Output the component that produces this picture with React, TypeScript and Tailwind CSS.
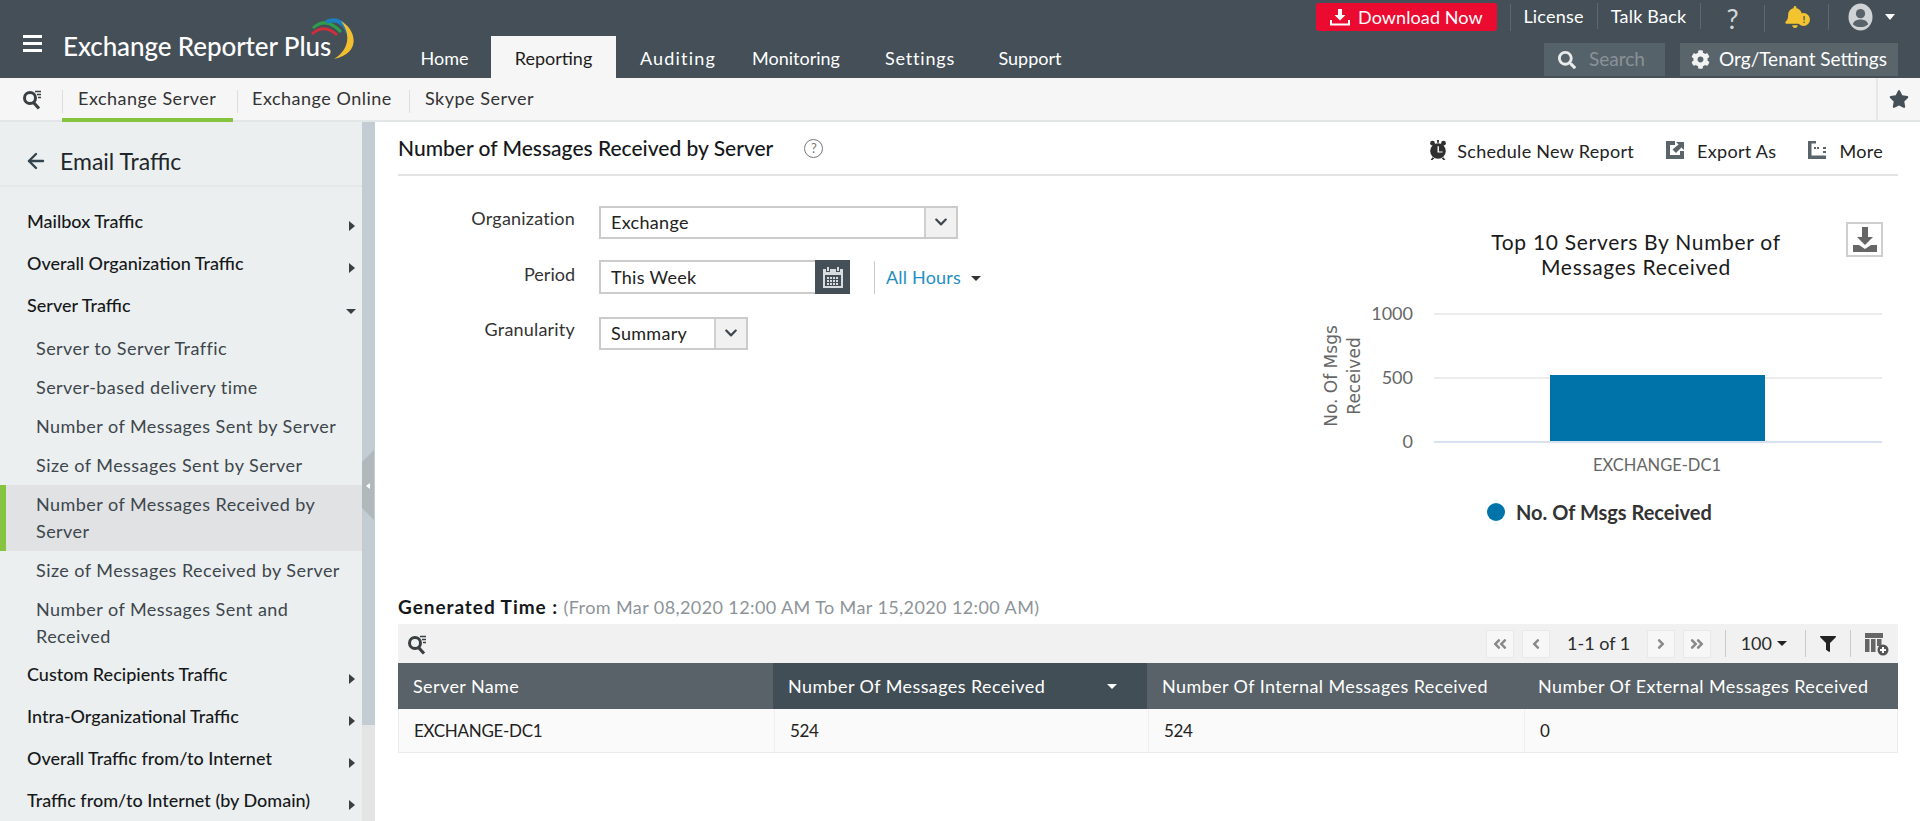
import { FaStar, FaCog, FaSearch, FaFilter, FaAngleDoubleLeft, FaAngleDoubleRight, FaAngleLeft, FaAngleRight, FaChevronDown, FaBell } from "react-icons/fa"
import { ArrowLeft } from "lucide-react"

const Caret = ({ dir = "down", className = "" }: { dir?: "down" | "right"; className?: string }) =>
  dir === "down" ? (
    <span className={`inline-block w-0 h-0 border-x-[5px] border-x-transparent border-t-[5px] ${className}`} />
  ) : (
    <span className={`inline-block w-0 h-0 border-y-[5px] border-y-transparent border-l-[6px] ${className}`} />
  )

const SearchLines = () => (
  <svg width="20" height="22" viewBox="0 0 20 22" fill="none" stroke="#3a3f42">
    <circle cx="8" cy="10" r="5.5" strokeWidth="3" />
    <path d="M11.5 14.5 L17 20.5" strokeWidth="3.2" />
    <path d="M13 3.5h6M15 6.5h4M16 9.5h3" strokeWidth="1.4" />
  </svg>
)

const Logo = () => (
  <svg width="48" height="54" viewBox="0 0 48 54" fill="none" className="-ml-[20px] -mt-[11px]">
    <path d="M2 11 Q15 -1 30 15" stroke="#2f9e4a" strokeWidth="3" />
    <path d="M1 17 Q13 6 26 18" stroke="#d12d3a" strokeWidth="3" />
    <path d="M15 5 Q32 -2 39 21" stroke="#1c7fc0" strokeWidth="4" />
    <path d="M30 4 C47 14 49 37 23 42 C37 34 41 18 30 4 Z" fill="#f2bf2f" />
  </svg>
)

const topLinks = ["License", "Talk Back"]
const tabs = [
  { name: "Home", cls: "w-[93px]" },
  { name: "Reporting", cls: "w-[125px] bg-[#f6f6f6] text-[#1d1d1d]" },
  { name: "Auditing", cls: "w-[124px] tracking-[1.2px]" },
  { name: "Monitoring", cls: "w-[112px]" },
  { name: "Settings", cls: "w-[136px] tracking-[0.8px]" },
  { name: "Support", cls: "w-[84px]" },
]

const Header = () => (
  <header className="h-[78px] bg-[#444f57] flex text-white shrink-0">
    <div className="w-[23px]" />
    <div className="flex flex-col gap-[4px] w-[19px] mt-[35px] h-[18px]">
      <span className="h-[3px] bg-white" />
      <span className="h-[3px] bg-white" />
      <span className="h-[3px] bg-white" />
    </div>
    <div className="ml-[21px] mt-[28px] w-[335px] flex items-start">
      <span className="text-[26px] leading-[36px] font-medium tracking-[-0.1px] whitespace-nowrap">Exchange Reporter Plus</span>
      <Logo />
    </div>
    <nav className="flex items-end">
      {tabs.map((t) => (
        <div key={t.name} className={`h-[42px] flex items-center justify-center text-[18px] pt-[2px] ${t.cls}`}>
          {t.name}
        </div>
      ))}
    </nav>
    <div className="flex-1" />
    <div className="flex flex-col w-[604px] pr-[22px]">
      <div className="flex items-center justify-end h-[43px] pt-[1px] mr-[3px] text-[18px]">
        <div className="w-[181px] h-[28px] -mt-[10px] rounded-[3px] bg-[#ec0b30] flex items-center pl-[14px] gap-[8px]">
          <svg width="20" height="18" viewBox="0 0 20 18" fill="white">
            <path d="M8 1h4v6h3.5L10 12.5 4.5 7H8z" />
            <path d="M0 12v5.5h20V12h-2v3.5H2V12z" />
          </svg>
          <span className="text-[18px] tracking-[0.1px]">Download Now</span>
        </div>
        <div className="w-[1px] h-[27px] bg-[#5d676e] ml-[13px] -mt-[10px]" />
        <div className="flex items-center -mt-[12px]">
          {topLinks.map((l, i) => (
            <div key={l} className={`flex items-center justify-center border-r border-[#5d676e] h-[26px] tracking-[0.2px] ${i === 0 ? "w-[87px]" : "w-[103px]"}`}>
              {l}
            </div>
          ))}
        </div>
        <div className="w-[65px] text-center text-[27px] leading-none text-[#d4d7d9] -mt-[8px] border-r border-[#5d676e]">?</div>
        <div className="w-[64px] flex justify-center -mt-[10px] relative border-r border-[#5d676e] h-[26px]">
          <FaBell size={22} color="#f4c430" className="mt-[2px] -ml-[4px]" />
          <span className="absolute left-[32px] top-[9px] w-[13px] h-[13px] rounded-full bg-[#f4c430] text-[#444f57] text-[10px] leading-[13px] text-center font-bold">!</span>
        </div>
        <div className="w-[66px] flex items-center justify-end gap-[12px] -mt-[10px]">
          <svg width="25" height="28" viewBox="0 0 26 29">
            <ellipse cx="13" cy="14.5" rx="12.5" ry="14" fill="#cfd3d6" />
            <circle cx="13" cy="11" r="4.8" fill="#58626a" />
            <path d="M5 22c1-4 5-5 8-5s7 1 8 5c-2 2-5 3-8 3s-6-1-8-3z" fill="#58626a" />
          </svg>
          <Caret className="border-t-white border-x-[5.5px] border-t-[6px]" />
        </div>
      </div>
      <div className="flex justify-end gap-[15px]">
        <div className="w-[121px] h-[33px] bg-[#56626a] flex items-center pl-[14px] gap-[13px]">
          <FaSearch size={18} color="#e8eaeb" />
          <span className="text-[19px] text-[#8a9298]">Search</span>
        </div>
        <div className="w-[218px] h-[33px] bg-[#59646b] flex items-center justify-center gap-[9px] text-[19px]">
          <FaCog size={19} color="#f2f2f2" />
          <span className="whitespace-nowrap">Org/Tenant Settings</span>
        </div>
      </div>
    </div>
  </header>
)

const subTabs = ["Exchange Server", "Exchange Online", "Skype Server"]

const SubNav = () => (
  <div className="h-[44px] bg-[#f6f6f6] border-b-[2px] border-[#e2e6e6] flex items-stretch shrink-0 text-[18px] text-[#333]">
    <div className="w-[62px] flex items-center justify-center pb-[1px] pl-[1px]">
      <SearchLines />
    </div>
    {subTabs.map((t, i) => (
      <div key={t} className={`relative flex items-center ${i === 0 ? "w-[175px] pl-[16px]" : i === 1 ? "w-[172px] pl-[15px]" : "pl-[16px]"}`}>
        <span className="absolute left-0 top-[12px] h-[23px] w-[1px] bg-[#dcdfdf]" />
        {i === 0 && <span className="absolute left-0 w-[171px] -bottom-[2px] h-[4px] bg-[#86c440]" />}
        <span className="tracking-[0.5px] -mt-[1px]">{t}</span>
      </div>
    ))}
    <div className="flex-1" />
    <div className="w-[44px] border-l-[2px] border-[#e6e8e8] flex items-center pl-[11px]">
      <FaStar size={20} color="#444f57" />
    </div>
  </div>
)

const Group = ({ label, open = false }: { label: string; open?: boolean }) => (
  <div className="h-[42px] pl-[27px] pr-[6px] flex items-center justify-between text-[18px] font-medium text-[#16191b]">
    <span className="-mt-[3px]">{label}</span>
    {open ? <Caret className="border-t-[#3a3f42] mt-[8px]" /> : <Caret dir="right" className="border-l-[#3a3f42] mr-[1px] mt-[6px]" />}
  </div>
)

const Sub = ({ label, active = false }: { label: string; active?: boolean }) => (
  <div className={`pr-[10px] py-[6px] text-[18px] leading-[27px] tracking-[0.45px] text-[#3d464d] ${active ? "bg-[#e0e2e3] border-l-[6px] border-[#86c440] pl-[30px]" : "pl-[36px]"}`}>
    {label}
  </div>
)

const Sidebar = () => (
  <aside className="w-[375px] flex shrink-0 overflow-hidden">
    <div className="w-[362px] bg-[#ecefef] overflow-hidden">
      <div className="h-[65px] border-b-[2px] border-[#e5e8e8] flex items-center pl-[24px] pt-[15px] gap-[12px] text-[#20262b]">
        <ArrowLeft size={24} color="#33444f" strokeWidth={2.4} />
        <span className="text-[23px]">Email Traffic</span>
      </div>
      <div className="pt-[15px]">
        <Group label="Mailbox Traffic" />
        <Group label="Overall Organization Traffic" />
        <Group label="Server Traffic" open />
        <div className="mt-[1px]">
          <Sub label="Server to Server Traffic" />
          <Sub label="Server-based delivery time" />
          <Sub label="Number of Messages Sent by Server" />
          <Sub label="Size of Messages Sent by Server" />
          <Sub label="Number of Messages Received by Server" active />
          <Sub label="Size of Messages Received by Server" />
          <Sub label="Number of Messages Sent and Received" />
        </div>
        <div className="-mt-[1px]">
          <Group label="Custom Recipients Traffic" />
          <Group label="Intra-Organizational Traffic" />
          <Group label="Overall Traffic from/to Internet" />
          <Group label="Traffic from/to Internet (by Domain)" />
        </div>
      </div>
    </div>
    <div className="w-[13px] flex flex-col">
      <div className="h-[603px] bg-[#c3ccd3] relative">
        <div className="absolute left-0 top-[328px] w-[12px] h-[70px] bg-[#b0b8bb] [clip-path:polygon(0_12px,100%_0,100%_100%,0_calc(100%-12px))]" />
        <span className="absolute left-[4px] top-[361px] w-0 h-0 border-y-[3px] border-y-transparent border-r-[4px] border-r-white" />
      </div>
      <div className="flex-1 bg-[#e4e4e4]" />
    </div>
  </aside>
)

const ActionIcon = ({ kind }: { kind: "clock" | "export" | "more" }) => {
  if (kind === "clock")
    return (
      <svg width="20" height="22" viewBox="0 0 20 24" fill="#2f2f2f">
        <circle cx="10" cy="13" r="8.5" />
        <circle cx="4" cy="4.5" r="2.6" />
        <circle cx="16" cy="4.5" r="2.6" />
        <path d="M9 1h2v3H9zM4 20l-2 3h2l2-2zM16 20l2 3h-2l-2-2z" />
        <path d="M9.5 8h1.5v5.5h4v1.3H9.5z" fill="#fff" />
      </svg>
    )
  if (kind === "export")
    return (
      <svg width="18" height="18" viewBox="0 0 18 18" fill="#59646b">
        <path d="M0 0h9v4H4v10h10V10h4v8H0z" />
        <path d="M10 1h8v8l-2.6-2.6L10 12 6.5 8.5 12.6 3.6z" />
      </svg>
    )
  return (
    <svg width="18" height="18" viewBox="0 0 18 18" fill="#59646b">
      <path d="M0 0h8v2.5H3.5v12H18V18H0z" />
      <path d="M6 6h2v2H6zM9 6h2v2H9zM15 6h3v2h-3zM15 10h3v2h-3z" />
    </svg>
  )
}

const TitleBar = () => (
  <div className="h-[54px] border-b-[2px] border-[#e2e4e4] flex items-center">
    <h1 className="text-[21px] font-medium text-[#15181a]">Number of Messages Received by Server</h1>
    <span className="ml-[31px] w-[19px] h-[19px] rounded-full border-[1.5px] border-[#777] text-[#777] text-[13px] leading-[16px] text-center">?</span>
    <div className="flex-1" />
    <div className="flex items-center text-[18px] tracking-[0.3px] text-[#222] mr-[15px] mt-[7px]">
      <span className="-mt-[3px] flex"><ActionIcon kind="clock" /></span>
      <span className="ml-[9px] mr-[32px]">Schedule New Report</span>
      <span className="-mt-[3px] flex"><ActionIcon kind="export" /></span>
      <span className="ml-[13px] mr-[32px]">Export As</span>
      <span className="-mt-[3px] flex"><ActionIcon kind="more" /></span>
      <span className="ml-[13px]">More</span>
    </div>
  </div>
)

const SelectArrow = ({ w }: { w: string }) => (
  <span className={`h-full ${w} flex items-center justify-center bg-[#f1f1f1] border-l-[2px] border-[#cfcfcf]`}>
    <FaChevronDown size={14} color="#3d464d" />
  </span>
)

const Filters = () => (
  <div className="pt-[29px] text-[18px] text-[#333]">
    <div className="flex items-center h-[34px]">
      <span className="w-[177px] text-right -mt-[7px] tracking-[0.2px]">Organization</span>
      <div className="ml-[24px] w-[359px] h-[33px] border-[2px] border-[#cbcbcb] flex items-center justify-between">
        <span className="pl-[10px] pt-[1px] text-[#222] tracking-[0.3px]">Exchange</span>
        <SelectArrow w="w-[32px]" />
      </div>
    </div>
    <div className="flex items-center h-[34px] mt-[21px]">
      <span className="w-[177px] text-right -mt-[6px]">Period</span>
      <div className="ml-[24px] w-[251px] h-[34px] border-[2px] border-r-0 border-[#cbcbcb] flex items-center justify-between">
        <span className="pl-[10px] pt-[1px] text-[#222] tracking-[0.3px]">This Week</span>
        <span className="w-[35px] h-[34px] bg-[#444f57] flex items-center justify-center">
          <svg width="20" height="21" viewBox="0 0 20 21" fill="#d9dcde">
            <path d="M4 0h2v4H4zM14 0h2v4h-2zM0 2h3v3h4V2h6v3h4V2h3v19H0zM2 8v11h16V8z" />
            <path d="M4 10h2v2H4zM7 10h2v2H7zM10 10h2v2h-2zM13 10h2v2h-2zM4 13h2v2H4zM7 13h2v2H7zM10 13h2v2h-2zM13 13h2v2h-2zM4 16h2v2H4zM7 16h2v2H7zM10 16h2v2h-2zM13 16h2v2h-2z" />
          </svg>
        </span>
      </div>
      <span className="ml-[24px] w-[1px] h-[33px] bg-[#c9c9c9]" />
      <span className="ml-[11px] pt-[1px] text-[#1f8fc4] tracking-[0.2px]">All Hours</span>
      <Caret className="ml-[10px] mt-[2px] border-t-[#333]" />
    </div>
    <div className="flex items-center h-[34px] mt-[22px]">
      <span className="w-[177px] text-right -mt-[7px] tracking-[0.2px]">Granularity</span>
      <div className="ml-[24px] w-[149px] h-[33px] border-[2px] border-[#cbcbcb] flex items-center justify-between">
        <span className="pl-[10px] pt-[1px] text-[#222] tracking-[0.3px]">Summary</span>
        <SelectArrow w="w-[32px]" />
      </div>
    </div>
  </div>
)

const Chart = () => (
  <div className="relative w-[600px] h-[370px]">
    <button className="absolute right-[37px] top-[46px] w-[37px] h-[35px] border-[2px] border-[#cfcfcf] bg-white flex items-center justify-center">
      <svg width="26" height="26" viewBox="0 0 26 26" fill="#666">
        <path d="M10 0h6v10h5l-8 8-8-8h5z" />
        <path d="M1 18h6l6 4 6-4h6v7H1z" />
      </svg>
    </button>
    <svg width="600" height="370" viewBox="0 0 600 370">
      <text x="316" y="74" textAnchor="middle" fontFamily="Lato, sans-serif" fontSize="21" letterSpacing="0.7" fill="#1a1a1a">Top 10 Servers By Number of</text>
      <text x="316" y="99" textAnchor="middle" fontFamily="Lato, sans-serif" fontSize="21" letterSpacing="0.7" fill="#1a1a1a">Messages Received</text>
      <path d="M114 138H562M114 202H562" stroke="#e6e6e6" strokeWidth="1.5" />
      <path d="M114 266H562" stroke="#ccd6eb" strokeWidth="1.5" />
      <rect x="230" y="199" width="215" height="66" fill="#0073a8" />
      <g fontFamily="Lato, sans-serif" fontSize="18" fill="#666" textAnchor="end">
        <text x="93" y="144">1000</text>
        <text x="93" y="208">500</text>
        <text x="93" y="272">0</text>
      </g>
      <text x="337" y="295" textAnchor="middle" fontFamily="Lato, sans-serif" fontSize="16.5" fill="#666">EXCHANGE-DC1</text>
      <g fontFamily="'DejaVu Sans', sans-serif" fontSize="17" fill="#666" textAnchor="middle">
        <text transform="translate(17 200) rotate(-90)">No. Of Msgs</text>
        <text transform="translate(40 200) rotate(-90)">Received</text>
      </g>
      <circle cx="176" cy="336" r="9" fill="#0073a8" />
      <text x="196" y="344" fontFamily="Lato, sans-serif" fontSize="20" fontWeight="700" fill="#333">No. Of Msgs Received</text>
    </svg>
  </div>
)

const PagerBtn = ({ children }: { children: React.ReactNode }) => (
  <span className="w-[28px] h-[28px] bg-[#f7f7f7] border border-[#e9e9e9] flex items-center justify-center text-[#8a8a8a]">{children}</span>
)

const columns = [
  { name: "Server Name", w: "w-[375px]", v: "EXCHANGE-DC1" },
  { name: "Number Of Messages Received", w: "w-[374px]", v: "524", sorted: true },
  { name: "Number Of Internal Messages Received", w: "w-[376px]", v: "524" },
  { name: "Number Of External Messages Received", w: "flex-1", v: "0" },
]

const ReportTable = () => (
  <div className="mr-[22px]">
    <div className="h-[34px] flex items-center text-[18px] whitespace-pre">
      <span className="font-bold text-[19px] text-[#15181a] tracking-[0.95px]">Generated Time : </span>
      <span className="text-[#8d9499] tracking-[0.4px]">(From Mar 08,2020 12:00 AM To Mar 15,2020 12:00 AM)</span>
    </div>
    <div className="h-[39px] bg-[#f1f1f1] flex items-center text-[18px] text-[#2c2c2c]">
      <span className="ml-[9px] flex"><SearchLines /></span>
      <div className="flex-1" />
      <PagerBtn><FaAngleDoubleLeft size={16} /></PagerBtn>
      <span className="ml-[8px]"><PagerBtn><FaAngleLeft size={16} /></PagerBtn></span>
      <span className="ml-[16px] w-[66px] text-center whitespace-nowrap">1-1 of 1</span>
      <span className="ml-[15px]"><PagerBtn><FaAngleRight size={16} /></PagerBtn></span>
      <span className="ml-[8px]"><PagerBtn><FaAngleDoubleRight size={16} /></PagerBtn></span>
      <span className="w-[1px] h-[27px] bg-[#c9c9c9] ml-[14px]" />
      <span className="ml-[15px]">100</span>
      <Caret className="ml-[5px] border-t-[#222]" />
      <span className="w-[1px] h-[27px] bg-[#c9c9c9] ml-[18px]" />
      <span className="ml-[14px] flex"><FaFilter size={16} color="#222" /></span>
      <span className="w-[1px] h-[27px] bg-[#c9c9c9] ml-[14px]" />
      <span className="ml-[14px] mr-[9px] flex">
        <svg width="24" height="24" viewBox="0 0 24 24" fill="#666">
          <path d="M0 1h18v5H0zM0 7h4.5v13H0zM6 7h4.5v13H6zM12 7h4.5v7H12z" />
          <circle cx="18" cy="18" r="5.5" fill="#555" />
          <path d="M17 15h2v2h2v2h-2v2h-2v-2h-2v-2h2z" fill="#fff" />
        </svg>
      </span>
    </div>
    <div className="flex h-[46px] bg-[#586268] text-white text-[18px] tracking-[0.4px] whitespace-nowrap">
      {columns.map((c) => (
        <div key={c.name} className={`${c.w} flex items-center pl-[15px] ${c.sorted ? "bg-[#424e56]" : ""}`}>
          <span>{c.name}</span>
          {c.sorted && <Caret className="ml-[62px] border-t-white" />}
        </div>
      ))}
    </div>
    <div className="flex h-[44px] bg-[#fafafa] border-b border-x border-[#ececec] text-[17px] tracking-[-0.3px] text-[#222]">
      {columns.map((c, i) => (
        <div key={c.name} className={`${c.w} flex items-center pl-[15px] ${i > 0 ? "border-l border-[#efefef]" : ""}`}>
          {c.v}
        </div>
      ))}
    </div>
  </div>
)

export default function App() {
  return (
    <div className="h-[821px] w-[1920px] overflow-hidden flex flex-col bg-white font-['Lato',sans-serif]">
      <Header />
      <SubNav />
      <div className="flex flex-1 min-h-0">
        <Sidebar />
        <main className="flex-1 pl-[23px] min-w-0">
          <div className="mr-[22px]"><TitleBar /></div>
          <div className="flex justify-between h-[414px]">
            <Filters />
            <Chart />
          </div>
          <ReportTable />
        </main>
      </div>
    </div>
  )
}
